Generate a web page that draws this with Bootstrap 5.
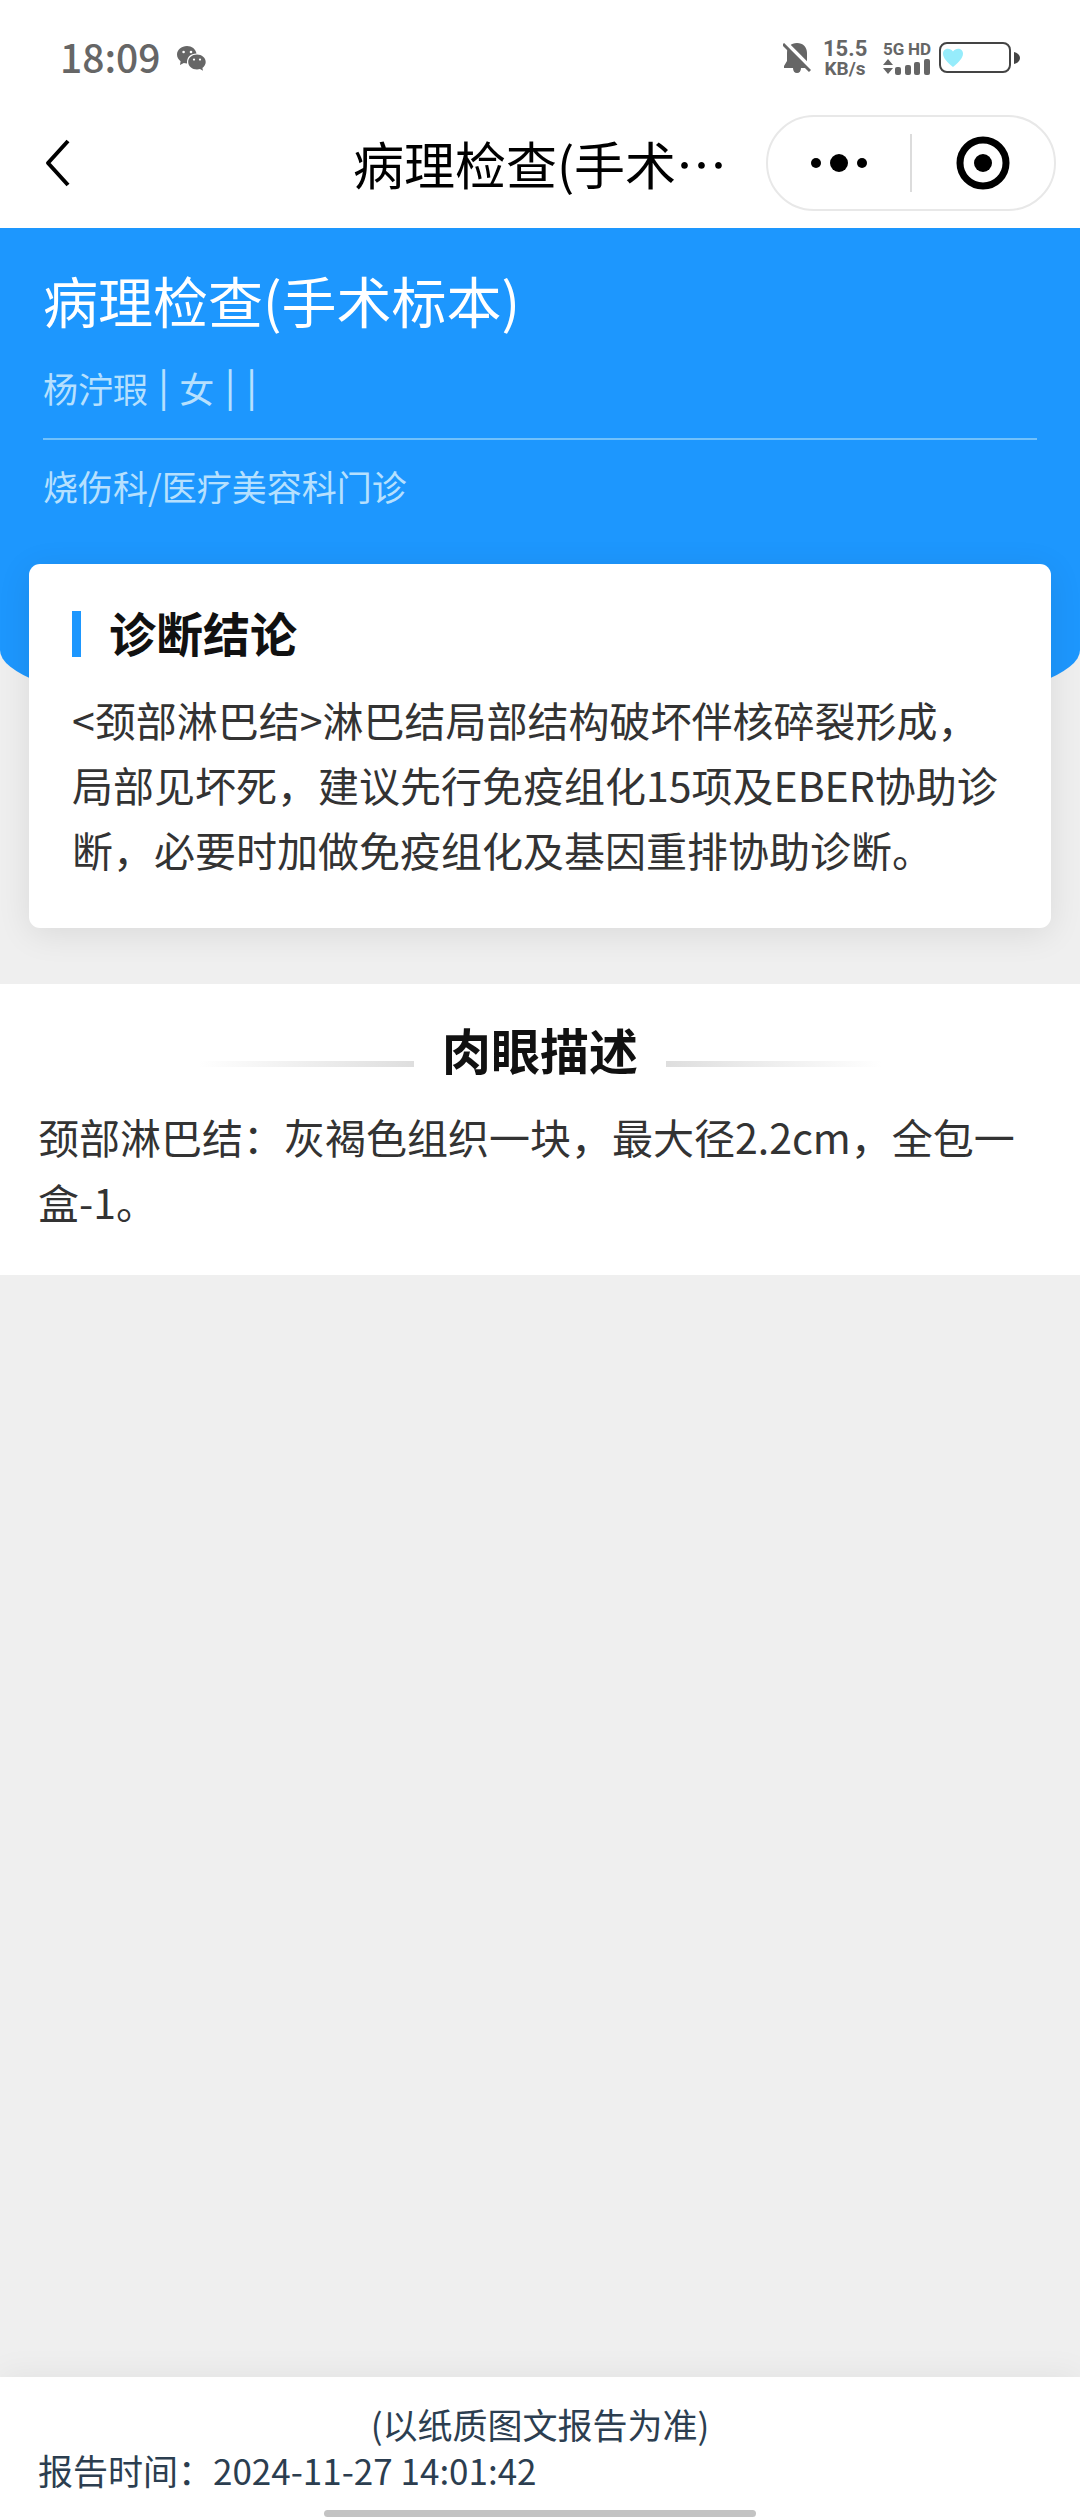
<!DOCTYPE html>
<html lang="zh-CN">
<head>
<meta charset="utf-8">
<meta name="viewport" content="width=device-width, initial-scale=1">
<title>病理检查(手术标本)</title>
<link href="https://cdn.jsdelivr.net/npm/bootstrap@5.3.0/dist/css/bootstrap.min.css" rel="stylesheet">
<style>
  body { font-family: "Noto Sans CJK SC", sans-serif; background: #efefef; color: #333; }
  svg { display: block; flex: none; }
  .status { height: 100px; padding: 16px 59px 0 60px; color: #666; }
  .clock { font-size: 39px; line-height: 48px; font-weight: 500; padding-bottom: 4px; }
  .net { width: 44px; font-family: Roboto, sans-serif; font-weight: 700; line-height: 20px; padding-top: 1px; }
  .net-rate { font-size: 22px; }
  .net-unit { font-size: 19px; }
  .net-5g { width: 48px; font-family: Roboto, sans-serif; font-size: 17px; line-height: 18px; font-weight: 700; }
  .nav-top { height: 128px; padding: 0 24px 2px; color: #000; }
  .nav-side { flex: 1 1 0; }
  .back { width: 44px; height: 60px; margin-left: 12px; }
  .nav-title { font-size: 51px; line-height: 72px; font-weight: 400; }
  .capsule { width: 290px; height: 96px; border: 2px solid #e8e8e8; border-radius: 48px; }
  .capsule button { flex: 1 1 0; }
  .capsule .split { width: 2px; height: 58px; background: #dcdcdc; }
  .hero { background: #1d97fe; padding: 32px 43px 224px; border-radius: 0 0 50% 50% / 0 0 86px 86px; }
  .hero h1 { font-size: 55px; line-height: 78px; font-weight: 400; color: #fff; }
  .hero p { font-size: 35px; line-height: 52px; color: #b6e0fe; }
  .hero .who { font-family: Inter, "Noto Sans CJK SC", sans-serif; padding-bottom: 22px; border-bottom: 2px solid #71c1fb; margin: 26px 0 20px; }
  .result { margin: -172px 29px 0; padding: 43px 43px 46px; border-radius: 11px; background: #fff; box-shadow: 0 6px 34px rgba(0,0,0,.09); }
  .heading { font-size: 47px; line-height: 50px; font-weight: 700; color: #111; }
  .result .heading { padding-bottom: 4px; }
  .detail .heading { font-size: 49px; line-height: 54px; }
  .tick { width: 9px; height: 46px; background: #1d97fe; }
  .copy { font-size: 41px; line-height: 65px; color: #333; }
  .result .copy { margin-top: 26px; }
  .detail { margin-top: 56px; padding: 38px 38px 41px; background: #fff; }
  .detail .copy { margin-top: 28px; }
  .fade-line { width: 216px; height: 6px; margin-top: 30px; background: linear-gradient(to left, #dedede, #fff); }
  .fade-line.flip { background: linear-gradient(to right, #dedede, #fff); }
  .foot { padding: 24px 38px 0; background: #fff; color: #2c3e50; font-size: 35px; line-height: 46px; box-shadow: 0 -4px 30px rgba(0,0,0,.05); }
  .home { width: 432px; height: 7px; border-radius: 4px; background: #c3c3c3; margin: 17px auto 3px; }
</style>
<script src="https://cdn.jsdelivr.net/npm/bootstrap@5.3.0/dist/js/bootstrap.bundle.min.js"></script>
</head>
<body class="d-flex flex-column min-vh-100">
<header class="bg-white">
  <div class="status d-flex align-items-center justify-content-between">
    <div class="d-flex align-items-center gap-3">
      <span class="clock">18:09</span>
      <svg width="29" height="26" viewBox="0 0 29 26" fill="#666" aria-label="微信">
        <path d="M10 1C4.500 1 0 4.800 0 9.600c0 2.700 1.400 5 3.600 6.600L3 20l3.800-2c1 .3 2.100.4 3.200.4C9.600 12 13.500 8.500 19.500 8.500 18.700 4 14.800 1 10 1z"/>
        <path d="M20 9.600c-4.900 0-8.800 3.300-8.800 7.500s3.900 7.500 8.800 7.500c1.100 0 2.100-.2 3-.5l3 1.700-.6-2.900c2-1.400 3.300-3.500 3.300-5.800 0-4.200-3.900-7.500-8.700-7.500z"/>
        <g fill="#fff"><circle cx="6.600" cy="7" r="1.300"/><circle cx="14" cy="7" r="1.300"/><circle cx="17" cy="14.600" r="1.100"/><circle cx="23" cy="14.600" r="1.100"/></g>
      </svg>
    </div>
    <div class="d-flex align-items-center">
      <svg class="me-2" width="28" height="31" viewBox="0 0 28 31" aria-label="静音">
        <path fill="#666" d="M14 0C8 0 4 4 4 10v8l-3 5v2h9c0 3 1.500 5 4 5s4-2 4-5h6V10C24 4 20 0 14 0z"/>
        <path stroke="#fff" stroke-width="4" d="M3 0 28 25"/>
        <path stroke="#666" stroke-width="3" d="M0 1 27 28"/>
      </svg>
      <div class="net ms-1 me-3 text-center"><div class="net-rate">15.5</div><div class="net-unit">KB/s</div></div>
      <div class="me-2">
        <div class="net-5g d-flex justify-content-between"><span>5G</span><span>HD</span></div>
        <svg width="48" height="18" viewBox="0 0 48 18" fill="#666" aria-label="信号">
          <path d="M5 1l5 6H0zM5 16l5-6H0z"/>
          <rect x="12" y="9" width="6" height="8" rx="2"/><rect x="22" y="7" width="6" height="10" rx="2"/><rect x="31" y="4" width="6" height="13" rx="2"/><rect x="41" y="1" width="6" height="16" rx="2"/>
        </svg>
      </div>
      <svg width="82" height="32" viewBox="0 0 82 32" aria-label="电量">
        <rect x="1" y="1" width="70" height="29" rx="7" fill="#fff" stroke="#444" stroke-width="2"/>
        <path d="M75 10c8 2 8 10 0 12z" fill="#444"/>
        <path d="M14 25C8 20 4 16 4 11.500 4 6 11 5 14 9.500 17 5 24 6 24 11.500 24 16 20 20 14 25z" fill="#96ecfb"/>
      </svg>
    </div>
  </div>
  <nav class="nav-top d-flex align-items-center">
    <div class="nav-side">
      <button class="back btn p-0 border-0" aria-label="返回">
        <svg width="44" height="60" viewBox="0 0 44 60" fill="none" stroke="#000" stroke-width="4" stroke-linejoin="round"><path d="M32 8 12 30l20 22"/></svg>
      </button>
    </div>
    <span class="nav-title">病理检查(手术…</span>
    <div class="nav-side d-flex justify-content-end">
      <div class="capsule d-flex align-items-center">
        <button class="btn p-0 border-0" aria-label="更多"><svg class="mx-auto" width="60" height="20" viewBox="0 0 60 20"><circle cx="7" cy="10" r="5"/><circle cx="30" cy="10" r="9"/><circle cx="53" cy="10" r="5"/></svg></button>
        <span class="split"></span>
        <button class="btn p-0 border-0" aria-label="关闭"><svg class="mx-auto" width="54" height="54" viewBox="0 0 54 54"><circle cx="27" cy="27" r="23" fill="none" stroke="#000" stroke-width="7"/><circle cx="27" cy="27" r="9"/></svg></button>
      </div>
    </div>
  </nav>
</header>
<main class="flex-grow-1">
  <section class="hero">
    <h1 class="m-0">病理检查(手术标本)</h1>
    <p class="who">杨泞瑕 | 女 | |</p>
    <p class="m-0">烧伤科/医疗美容科门诊</p>
  </section>
  <section class="result position-relative">
    <div class="d-flex align-items-center">
      <span class="tick"></span>
      <h2 class="heading m-0 ps-4 ms-1">诊断结论</h2>
    </div>
    <p class="copy mb-0">&lt;颈部淋巴结&gt;淋巴结局部结构破坏伴核碎裂形成，局部见坏死，建议先行免疫组化15项及EBER协助诊断，必要时加做免疫组化及基因重排协助诊断。</p>
  </section>
  <section class="detail">
    <div class="d-flex align-items-center justify-content-center">
      <span class="fade-line"></span>
      <h2 class="heading m-0 px-4 mx-1">肉眼描述</h2>
      <span class="fade-line flip"></span>
    </div>
    <p class="copy mb-0">颈部淋巴结：灰褐色组织一块，最大径2.2cm，全包一盒-1。</p>
  </section>
</main>
<footer class="foot">
  <div class="text-center">(以纸质图文报告为准)</div>
  <div>报告时间：2024-11-27 14:01:42</div>
  <div class="home"></div>
</footer>
</body>
</html>
